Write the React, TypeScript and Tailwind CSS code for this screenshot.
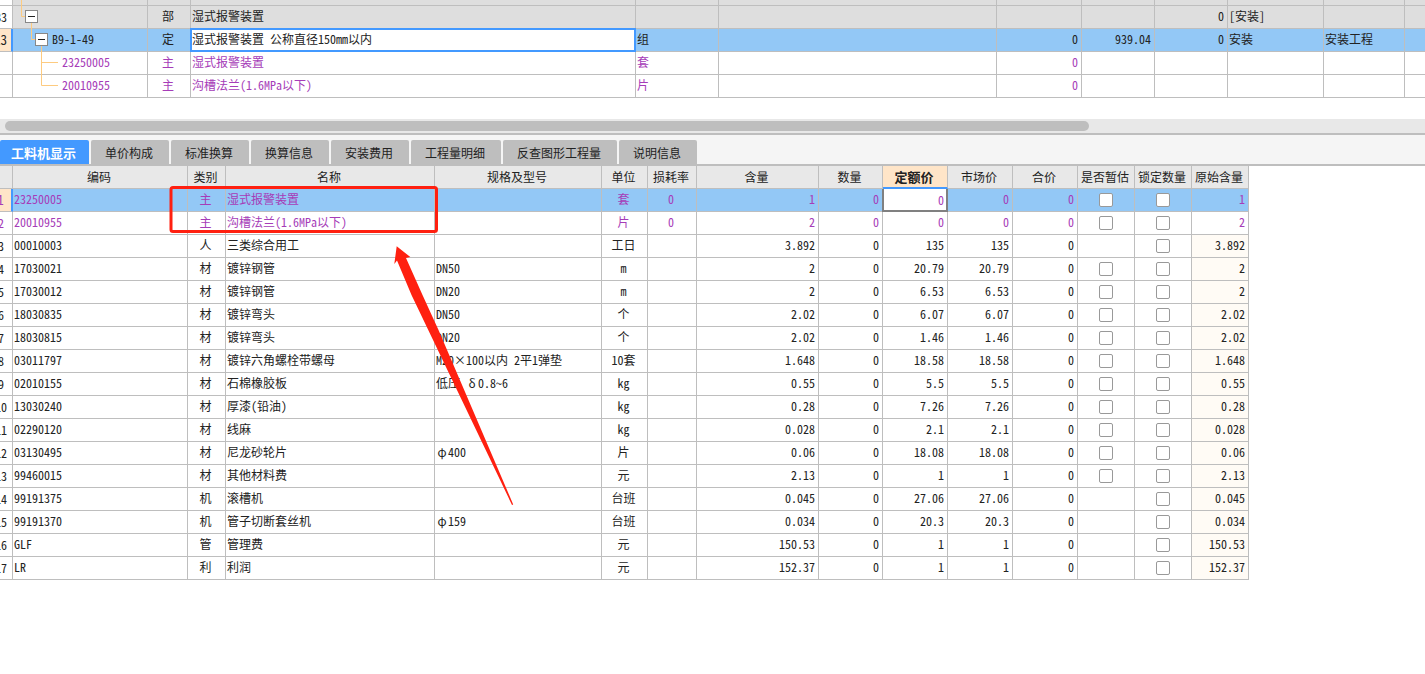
import { ReactNode, useState } from "react";
import clsx from "clsx";

const tabs = [
  "工料机显示",
  "单价构成",
  "标准换算",
  "换算信息",
  "安装费用",
  "工程量明细",
  "反查图形工程量",
  "说明信息",
];

const headers = [
  "编码",
  "类别",
  "名称",
  "规格及型号",
  "单位",
  "损耗率",
  "含量",
  "数量",
  "定额价",
  "市场价",
  "合价",
  "是否暂估",
  "锁定数量",
  "原始含量",
];

type Material = {
  code: string;
  kind: string;
  name: string;
  spec?: string;
  unit: string;
  loss?: string;
  amount: string;
  price: string;
  estimate?: boolean;
  main?: boolean;
};

const materials: Material[] = [
  { code: "23250005", kind: "主", name: "湿式报警装置", unit: "套", loss: "0", amount: "1", price: "0", estimate: true, main: true },
  { code: "20010955", kind: "主", name: "沟槽法兰(1.6MPa以下)", unit: "片", loss: "0", amount: "2", price: "0", estimate: true, main: true },
  { code: "00010003", kind: "人", name: "三类综合用工", unit: "工日", amount: "3.892", price: "135" },
  { code: "17030021", kind: "材", name: "镀锌钢管", spec: "DN50", unit: "m", amount: "2", price: "20.79", estimate: true },
  { code: "17030012", kind: "材", name: "镀锌钢管", spec: "DN20", unit: "m", amount: "2", price: "6.53", estimate: true },
  { code: "18030835", kind: "材", name: "镀锌弯头", spec: "DN50", unit: "个", amount: "2.02", price: "6.07", estimate: true },
  { code: "18030815", kind: "材", name: "镀锌弯头", spec: "DN20", unit: "个", amount: "2.02", price: "1.46", estimate: true },
  { code: "03011797", kind: "材", name: "镀锌六角螺栓带螺母", spec: "M20×100以内 2平1弹垫", unit: "10套", amount: "1.648", price: "18.58", estimate: true },
  { code: "02010155", kind: "材", name: "石棉橡胶板", spec: "低压 δ0.8~6", unit: "kg", amount: "0.55", price: "5.5", estimate: true },
  { code: "13030240", kind: "材", name: "厚漆(铅油)", unit: "kg", amount: "0.28", price: "7.26", estimate: true },
  { code: "02290120", kind: "材", name: "线麻", unit: "kg", amount: "0.028", price: "2.1", estimate: true },
  { code: "03130495", kind: "材", name: "尼龙砂轮片", spec: "φ400", unit: "片", amount: "0.06", price: "18.08", estimate: true },
  { code: "99460015", kind: "材", name: "其他材料费", unit: "元", amount: "2.13", price: "1", estimate: true },
  { code: "99191375", kind: "机", name: "滚槽机", unit: "台班", amount: "0.045", price: "27.06" },
  { code: "99191370", kind: "机", name: "管子切断套丝机", spec: "φ159", unit: "台班", amount: "0.034", price: "20.3" },
  { code: "GLF", kind: "管", name: "管理费", unit: "元", amount: "150.53", price: "1" },
  { code: "LR", kind: "利", name: "利润", unit: "元", amount: "152.37", price: "1" },
];

const Cell = ({
  children,
  className,
  bare,
}: {
  children?: ReactNode;
  className?: string;
  bare?: boolean;
}) => (
  <td
    className={clsx(
      "h-[23px] border-r border-b border-[#bebebe]",
      bare ? "p-0" : "pt-0 pr-[3px] pb-0.5 pl-px",
      className
    )}
  >
    {children}
  </td>
);

// the number column is scrolled half out of view on the left
const RowNumber = ({ value, active }: { value?: string; active?: boolean }) => (
  <th
    scope="row"
    className={clsx(
      "h-[23px] overflow-hidden border-b border-b-[#bebebe] p-0 font-normal",
      active
        ? "border-r-2 border-r-[#4399ff] bg-[#ffe5c8] text-[13px] font-bold"
        : "border-r border-r-[#bebebe] bg-white"
    )}
  >
    <div className="-ml-2.5 flex justify-center">{value}</div>
  </th>
);

const Branch = ({ width, d }: { width: number; d: string }) => (
  <svg width={width} height="20" className="block shrink-0 overflow-visible" fill="none" stroke="#fdcb80">
    <path d={d} />
  </svg>
);

const Toggle = () => (
  <button
    type="button"
    aria-label="收起"
    className="flex size-[13px] shrink-0 items-center justify-center border border-[#888] bg-white"
  >
    <span className="h-px w-[7px] bg-[#222]" />
  </button>
);

const TreeCell = ({ children }: { children: ReactNode }) => (
  <Cell bare className="align-top">
    <div className="flex h-5 items-center">{children}</div>
  </Cell>
);

// greek letters take a full character cell, like the chinese ones
const Spec = ({ text = "" }: { text?: string }) => (
  <>
    {text.split(/([φδ])/).map((part, i) =>
      part === "φ" || part === "δ" ? (
        <span key={i} className="inline-block w-3 text-center">
          {part}
        </span>
      ) : (
        part
      )
    )}
  </>
);

const QuotaTable = () => {
  const [name, setName] = useState("湿式报警装置 公称直径150mm以内");

  return (
    <table className="w-full table-fixed border-separate border-spacing-0">
      <colgroup>
        <col className="w-[13px]" />
        <col className="w-[135px]" />
        <col className="w-[43px]" />
        <col className="w-[445px]" />
        <col className="w-[83px]" />
        <col className="w-[278px]" />
        <col className="w-[85px]" />
        <col className="w-[73px]" />
        <col className="w-[73px]" />
        <col className="w-[96px]" />
        <col className="w-[81px]" />
        <col />
      </colgroup>
      <tbody>
        <tr className="bg-[#dedede]">
          <td className="h-[6px] border-r border-b border-[#bebebe] bg-white p-0" />
          {Array.from({ length: 11 }, (_, i) => (
            <td key={i} className="h-[6px] border-r border-b border-[#bebebe] p-0 last:border-r-0" />
          ))}
        </tr>
        <tr className="bg-[#dedede]">
          <RowNumber value="B3" />
          <TreeCell>
            <Branch width={12} d="M8.5 -6V10.5H12" />
            <Toggle />
          </TreeCell>
          <Cell className="text-center">部</Cell>
          <Cell>湿式报警装置</Cell>
          <Cell />
          <Cell />
          <Cell />
          <Cell />
          <Cell className="text-right">0</Cell>
          <Cell>[安装]</Cell>
          <Cell />
          <Cell className="border-r-0" />
        </tr>
        <tr className="bg-[#93c8f6]">
          <RowNumber value="13" active />
          <TreeCell>
            <Branch width={22} d="M18.5 -6V10.5H22" />
            <Toggle />
            <span className="pl-1">B9-1-49</span>
          </TreeCell>
          <Cell className="text-center">定</Cell>
          <Cell bare className="relative z-10">
            <div className="-m-px border-2 border-[#4399ff] bg-white">
              <input
                aria-label="名称"
                value={name}
                onChange={(e) => setName(e.target.value)}
                className="block h-5 w-full pb-0.5 outline-none"
              />
            </div>
          </Cell>
          <Cell>组</Cell>
          <Cell />
          <Cell className="text-right">0</Cell>
          <Cell className="text-right">939.04</Cell>
          <Cell className="text-right">0</Cell>
          <Cell>安装</Cell>
          <Cell>安装工程</Cell>
          <Cell className="border-r-0" />
        </tr>
        <tr className="text-[#a63cb8]">
          <RowNumber />
          <TreeCell>
            <Branch width={45} d="M28.5 -6V10.5H45" />
            <span className="pl-1">23250005</span>
          </TreeCell>
          <Cell className="text-center">主</Cell>
          <Cell>湿式报警装置</Cell>
          <Cell>套</Cell>
          <Cell />
          <Cell className="text-right">0</Cell>
          <Cell />
          <Cell />
          <Cell />
          <Cell />
          <Cell className="border-r-0" />
        </tr>
        <tr className="text-[#a63cb8]">
          <RowNumber />
          <TreeCell>
            <Branch width={45} d="M28.5 -13V10.5H45" />
            <span className="pl-1">20010955</span>
          </TreeCell>
          <Cell className="text-center">主</Cell>
          <Cell>沟槽法兰(1.6MPa以下)</Cell>
          <Cell>片</Cell>
          <Cell />
          <Cell className="text-right">0</Cell>
          <Cell />
          <Cell />
          <Cell />
          <Cell />
          <Cell className="border-r-0" />
        </tr>
      </tbody>
    </table>
  );
};

const CheckCell = ({ label, show = true }: { label: string; show?: boolean }) => (
  <Cell bare>
    {show && (
      <input
        type="checkbox"
        aria-label={label}
        className="mx-auto block size-[14px] appearance-none rounded-[2px] border border-[#999] bg-white checked:bg-[#4399ff]"
      />
    )}
  </Cell>
);

const MaterialTable = () => {
  const [price, setPrice] = useState("0");

  return (
    <table className="w-[1249px] table-fixed border-separate border-spacing-0">
      <colgroup>
        <col className="w-[13px]" />
        <col className="w-[175px]" />
        <col className="w-[38px]" />
        <col className="w-[209px]" />
        <col className="w-[167px]" />
        <col className="w-[46px]" />
        <col className="w-[49px]" />
        <col className="w-[122px]" />
        <col className="w-[64px]" />
        <col className="w-[65px]" />
        <col className="w-[65px]" />
        <col className="w-[65px]" />
        <col className="w-[57px]" />
        <col className="w-[57px]" />
        <col className="w-[57px]" />
      </colgroup>
      <thead>
        <tr className="bg-[#e8e8e8]">
          <td className="h-[23px] border-r border-b border-[#bebebe] p-0" />
          {headers.map((h) => (
            <th
              key={h}
              scope="col"
              className={clsx(
                "h-[23px] border-r border-r-[#bebebe] py-0 pr-0.5 pl-0 text-center",
                h === "定额价"
                  ? "relative z-20 border-b-2 border-b-[#4399ff] bg-[#ffe5c8] text-[13px] font-bold"
                  : "border-b border-b-[#bebebe] font-normal"
              )}
            >
              {h}
            </th>
          ))}
        </tr>
      </thead>
      <tbody>
        {materials.map((m, i) => (
          <tr key={m.code} className={clsx(i === 0 && "bg-[#93c8f6]", m.main && "text-[#a63cb8]")}>
            <RowNumber value={String(i + 1)} active={i === 0} />
            <Cell>{m.code}</Cell>
            <Cell className="text-center">{m.kind}</Cell>
            <Cell>{m.name}</Cell>
            <Cell>
              <Spec text={m.spec} />
            </Cell>
            <Cell className="text-center">{m.unit}</Cell>
            <Cell className="text-center">{m.loss}</Cell>
            <Cell className="text-right">{m.amount}</Cell>
            <Cell className="text-right">0</Cell>
            {i === 0 ? (
              <Cell bare className="relative z-10">
                <div className="-mx-px -mb-px border-2 border-t-0 border-[#808080] bg-white">
                  <input
                    aria-label="定额价"
                    value={price}
                    onChange={(e) => setPrice(e.target.value)}
                    className="block h-[21px] w-full pr-0.5 pb-px text-right outline-none"
                  />
                </div>
              </Cell>
            ) : (
              <Cell className="text-right">{m.price}</Cell>
            )}
            <Cell className="text-right">{m.price}</Cell>
            <Cell className="text-right">0</Cell>
            <CheckCell label={`${m.name} 是否暂估`} show={!!m.estimate} />
            <CheckCell label={`${m.name} 锁定数量`} />
            <Cell className={clsx("text-right", !m.main && "bg-[#fffbf5]")}>{m.amount}</Cell>
          </tr>
        ))}
      </tbody>
    </table>
  );
};

const Annotation = () => (
  <svg
    className="pointer-events-none absolute top-0 left-0 z-30"
    width="520"
    height="345"
    viewBox="0 166 520 345"
    fill="none"
    aria-hidden="true"
  >
    <rect x="171" y="187.5" width="265.5" height="44" rx="2" stroke="#ff2010" strokeWidth="3" />
    <path
      d="M396.7 246.3L410.3 257L406 258L422.5 295L438.5 330L513.2 504.5L512 505L411.5 295L397 260.5L394.3 264Z"
      fill="#ff2010"
    />
  </svg>
);

const App = () => {
  const [activeTab, setActiveTab] = useState(tabs[0]);

  return (
    <div className="min-h-screen overflow-x-hidden bg-white font-['Noto_Sans_Mono_CJK_SC','Noto_Sans_CJK_SC',monospace] text-[12px] leading-5 whitespace-nowrap text-[#222]">
      <QuotaTable />

      <div className="mt-[21px] border-b-2 border-[#bebebe] bg-[#e8e8e8] py-0.5 pr-[336px] pl-[5px]">
        <div className="h-[10px] rounded-full bg-[#bebebe]" />
      </div>

      <div role="tablist" className="flex gap-0.5 border-b-2 border-[#bebebe] bg-[#f5f5f5] pt-[5px]">
        {tabs.map((tab) => (
          <button
            key={tab}
            type="button"
            role="tab"
            aria-selected={tab === activeTab}
            onClick={() => setActiveTab(tab)}
            className={clsx(
              "h-6 rounded-t-[2px] pt-0.5",
              tab === activeTab
                ? "bg-[#4399ff] pr-[13px] pl-[11px] text-[13px] font-bold text-white"
                : "bg-[#bebebe] pr-4 pl-[14px]"
            )}
          >
            {tab}
          </button>
        ))}
      </div>

      <div className="relative">
        <MaterialTable />
        <Annotation />
      </div>
    </div>
  );
};

export default App;
